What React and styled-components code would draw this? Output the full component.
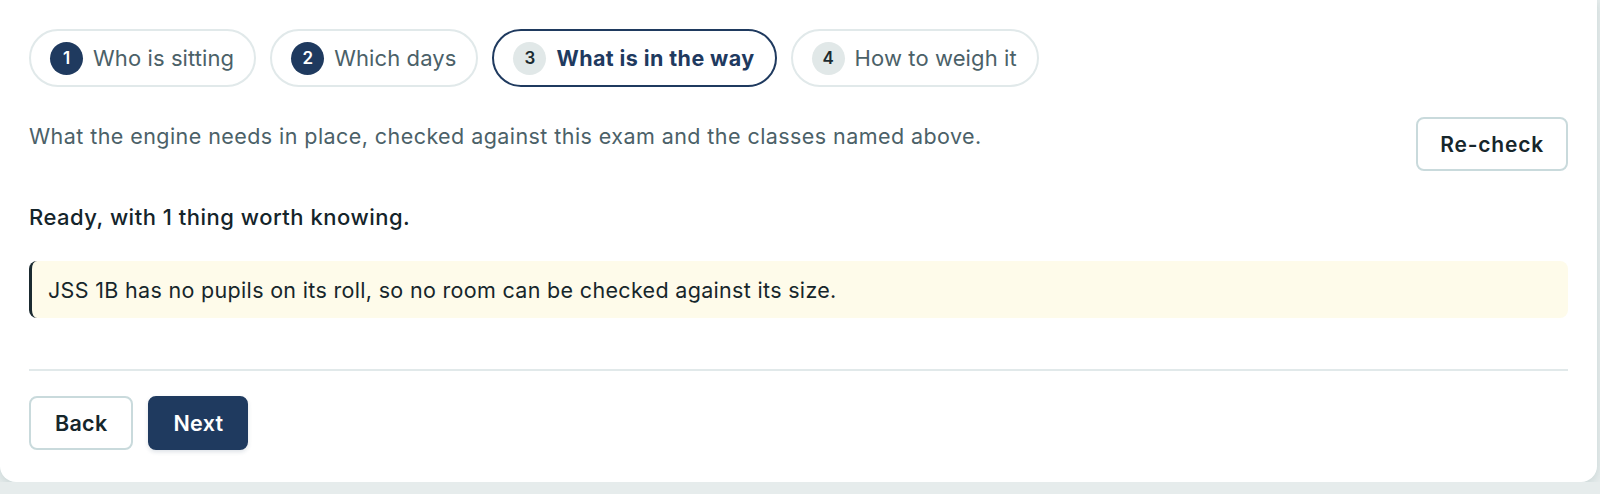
import React from "react";
import styled, { createGlobalStyle } from "styled-components";

const Global = createGlobalStyle`
  html, body { margin: 0; padding: 0; }
  body { background: #e6ecec; font-family: "Inter", "Noto Sans", sans-serif; }
`;

const Card = styled.div`
  width: 1597px;
  height: 482px;
  box-sizing: border-box;
  background: #ffffff;
  border-radius: 0 0 16px 16px;
  box-shadow: 0 3px 8px rgba(120, 150, 150, 0.25);
  padding: 29px 29px 0 29px;
  display: flex;
  flex-direction: column;
`;

const Steps = styled.div`
  display: flex;
  gap: 14px;
`;

const Step = styled.div`
  display: flex;
  align-items: center;
  gap: 10px;
  height: 58px;
  box-sizing: border-box;
  padding: 0 20px 0 19px;
  border-radius: 999px;
  border: ${(p) => (p.$active ? "2px solid #1f3a5f" : "2px solid #e1e9ea")};
  color: ${(p) => (p.$active ? "#1f3a5f" : "#4b6168")};
  font-weight: ${(p) => (p.$active ? 700 : 400)};
  font-size: ${(p) => (p.$active ? "21.5px" : "22px")};
  letter-spacing: ${(p) => (p.$active ? "0.4px" : "0.1px")};
`;

const Num = styled.span`
  width: 33px;
  height: 33px;
  border-radius: 50%;
  display: flex;
  align-items: center;
  justify-content: center;
  font-size: 17px;
  font-weight: 600;
  letter-spacing: 0;
  background: ${(p) => (p.$done ? "#1f3a5f" : "#e1e8e8")};
  color: ${(p) => (p.$done ? "#ffffff" : "#1c2b30")};
`;

const IntroRow = styled.div`
  display: flex;
  justify-content: space-between;
  align-items: flex-start;
  margin-top: 30px;
`;

const Intro = styled.p`
  margin: 6px 0 0;
  color: #4b6168;
  font-size: 21.5px;
  line-height: 26px;
  letter-spacing: 0.43px;
`;

const Button = styled.button`
  font-family: inherit;
  font-size: ${(p) => p.$size || 21.5}px;
  font-weight: 600;
  letter-spacing: ${(p) => p.$ls || 0.3}px;
  height: 54px;
  padding: 0 ${(p) => p.$pad || 24}px;
  border-radius: 8px;
  cursor: pointer;
  border: ${(p) => (p.$primary ? "2px solid #1f3a5f" : "2px solid #c9dadc")};
  background: ${(p) => (p.$primary ? "#1f3a5f" : "#ffffff")};
  color: ${(p) => (p.$primary ? "#ffffff" : "#16262b")};
  box-shadow: ${(p) => (p.$primary ? "0 2px 4px rgba(31,58,95,0.15)" : "none")};
`;

const Status = styled.h3`
  margin: 33px 0 0;
  font-size: 22px;
  line-height: 26px;
  font-weight: 500;
  letter-spacing: 0.5px;
  color: #14242a;
`;

const Notice = styled.div`
  margin-top: 31px;
  height: 57px;
  box-sizing: border-box;
  display: flex;
  align-items: center;
  padding: 0 16px;
  background: #fefbea;
  border-left: 3px solid #1b2a30;
  border-radius: 8px;
  font-size: 21.5px;
  letter-spacing: 0.32px;
  color: #16262b;
`;

const Divider = styled.hr`
  margin: 51px 0 0;
  border: 0;
  border-top: 2px solid #e1e9ea;
`;

const Actions = styled.div`
  display: flex;
  gap: 15px;
  margin-top: 25px;
`;

const steps = [
  { n: 1, label: "Who is sitting", done: true },
  { n: 2, label: "Which days", done: true },
  { n: 3, label: "What is in the way", active: true },
  { n: 4, label: "How to weigh it" },
];

export default function App() {
  return (
    <>
      <Global />
      <Card>
        <Steps>
          {steps.map((s) => (
            <Step key={s.n} $active={s.active}>
              <Num $done={s.done}>{s.n}</Num>
              {s.label}
            </Step>
          ))}
        </Steps>
        <IntroRow>
          <Intro>
            What the engine needs in place, checked against this exam and the classes named above.
          </Intro>
          <Button $size={21} $pad={22} $ls={0.8}>Re-check</Button>
        </IntroRow>
        <Status>Ready, with 1 thing worth knowing.</Status>
        <Notice>JSS 1B has no pupils on its roll, so no room can be checked against its size.</Notice>
        <Divider />
        <Actions>
          <Button $pad={24}>Back</Button>
          <Button $primary $pad={23}>Next</Button>
        </Actions>
      </Card>
    </>
  );
}
